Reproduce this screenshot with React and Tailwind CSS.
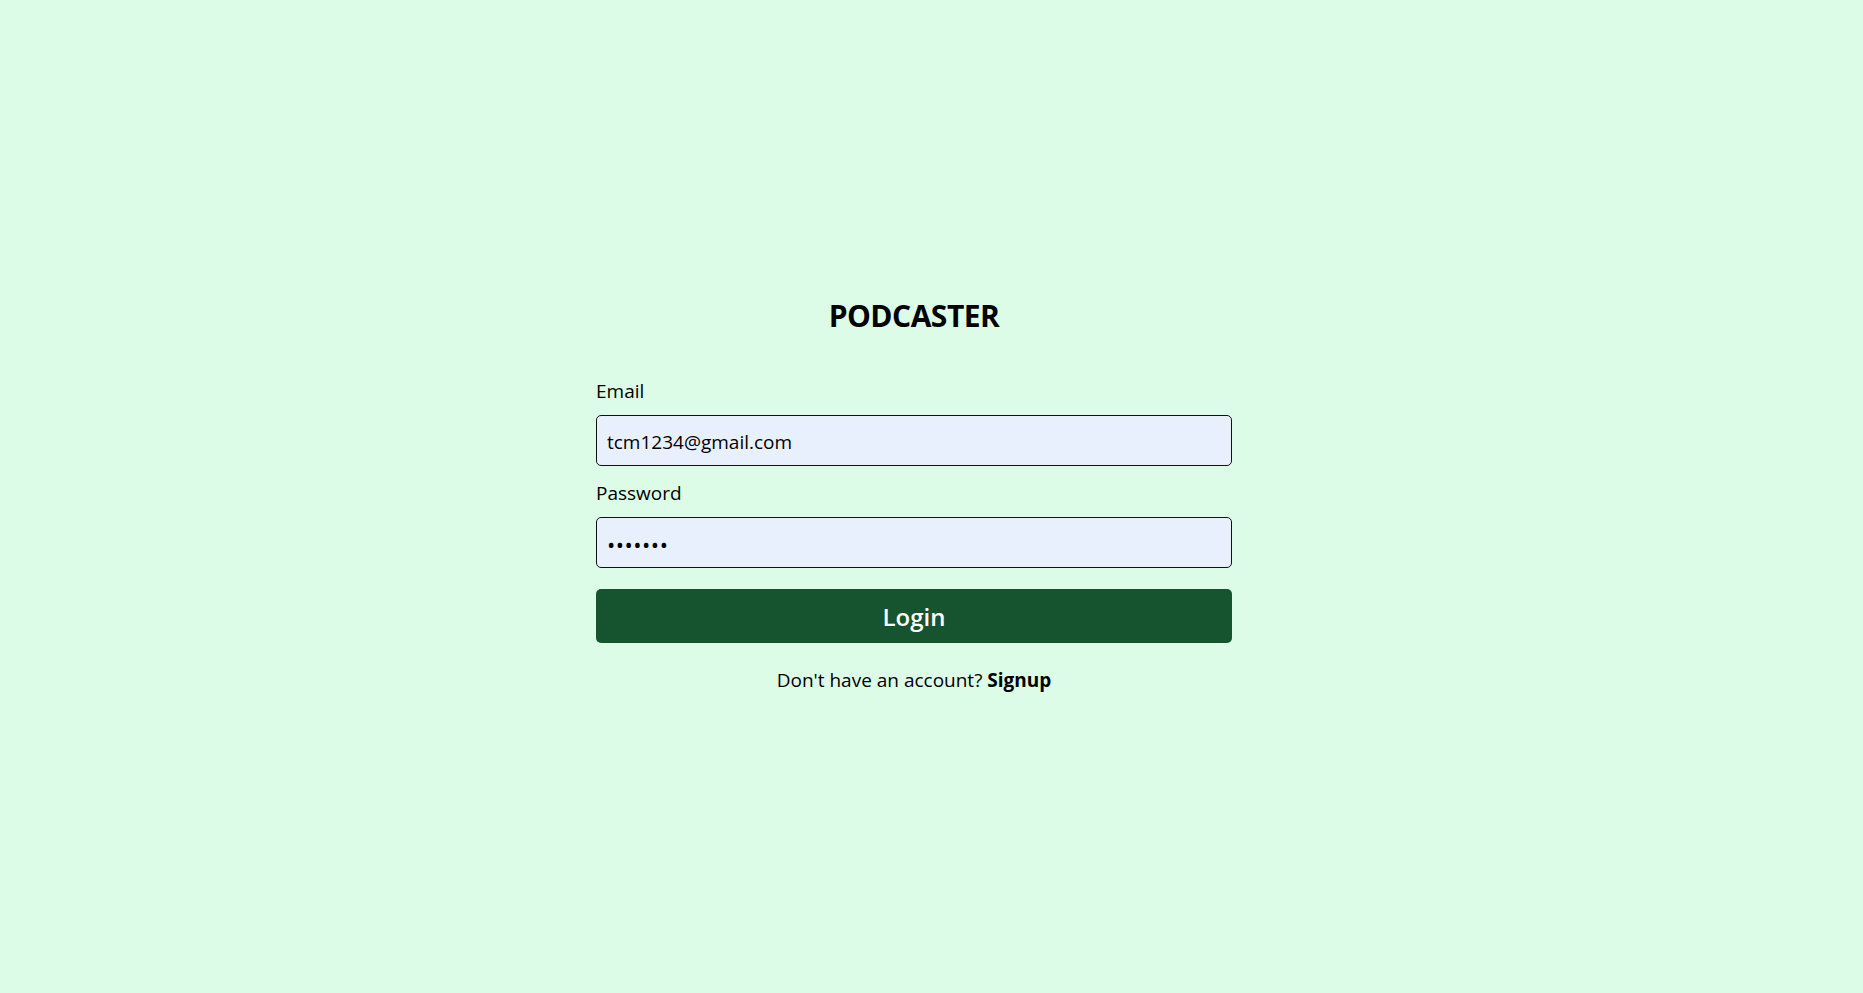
import React from "react";

export default function App() {
  const font = { fontFamily: '"Open Sans", "Noto Sans", sans-serif' };
  return (
    <div
      className="min-h-screen w-full bg-[#dcfce7] flex items-center justify-center pr-[35px] pb-[4px] text-black"
      style={font}
    >
      <div className="w-[636px] flex flex-col">
        <h1 className="text-center text-[30px] leading-[36px] font-bold tracking-[-0.5px]">
          PODCASTER
        </h1>
        <label className="mt-[45px] text-[19px] leading-[24px]">Email</label>
        <input
          type="email"
          defaultValue="tcm1234@gmail.com"
          className="mt-[12px] h-[51px] w-full rounded-[5px] border border-[#111] bg-[#e8f0fe] px-[10px] pt-[2px] text-[19px] text-black outline-none"
        />
        <label className="mt-[15px] text-[19px] leading-[24px]">Password</label>
        <input
          type="password"
          defaultValue="1234567"
          className="mt-[12px] h-[51px] w-full rounded-[5px] border border-[#111] bg-[#e8f0fe] px-[10px] pt-[2px] text-[22px] tracking-[0.5px] text-black outline-none"
        />
        <button className="mt-[21px] h-[54px] w-full rounded-[5px] bg-[#16532f] pt-[2px] text-[24px] font-semibold text-white">
          Login
        </button>
        <p className="mt-[25px] -mb-[1px] text-center text-[19px] leading-[24px]">
          Don't have an account? <span className="font-bold">Signup</span>
        </p>
      </div>
    </div>
  );
}
